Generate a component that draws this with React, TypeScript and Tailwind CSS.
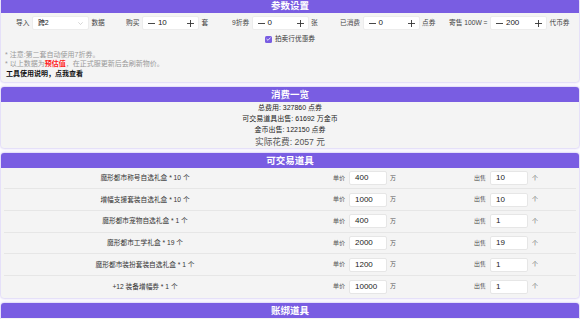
import { ReactNode } from "react";

const ITEMS = [
  { name: "魔形都市称号自选礼盒 * 10 个", price: "400", sell: "10" },
  { name: "增幅支援套装自选礼盒 * 10 个", price: "1000", sell: "10" },
  { name: "魔形都市宠物自选礼盒 * 1 个", price: "400", sell: "1" },
  { name: "魔形都市工学礼盒 * 19 个", price: "2000", sell: "19" },
  { name: "魔形都市装扮套装自选礼盒 * 1 个", price: "1200", sell: "1" },
  { name: "+12 装备增幅券 * 1 个", price: "10000", sell: "1" },
];

function Card({ title, children }: { title: string; children?: ReactNode }) {
  return (
    <div className="mb-[5px] rounded-[3px] overflow-hidden bg-[#f4f4f4] shadow-[0_0_3px_rgba(121,92,224,0.55)]">
      <div className="h-[15px] bg-[#795de2] text-white text-center font-bold text-[9.5px] leading-[15px]">
        {title}
      </div>
      {children}
    </div>
  );
}

function Minus() {
  return (
    <svg width="7" height="7" viewBox="0 0 7 7" className="shrink-0">
      <path d="M0 3.5h7" stroke="#333" strokeWidth="0.9" />
    </svg>
  );
}

function Plus() {
  return (
    <svg width="7" height="7" viewBox="0 0 7 7" className="shrink-0">
      <path d="M0 3.5h7M3.5 0v7" stroke="#333" strokeWidth="0.9" />
    </svg>
  );
}

function Stepper({ value }: { value: string }) {
  return (
    <div className="w-[57px] h-[14px] bg-white rounded-[2px] border border-[#ececec] flex items-center pl-[5px] pr-[4px] text-[8px] text-[#222]">
      <Minus />
      <span className="ml-[3px] flex-1 leading-none">{value}</span>
      <Plus />
    </div>
  );
}

function Field({ value }: { value: string }) {
  return (
    <div className="w-[38px] h-[14px] bg-white rounded-[2px] border border-[#e6e6e6] flex items-center pl-[5px] text-[8px] text-[#222] leading-none">
      {value}
    </div>
  );
}

export default function App() {
  return (
    <div className="min-h-screen bg-white px-[1px] -mt-[2px] font-['Liberation_Sans','Noto_Sans_CJK_SC',sans-serif] text-[6.7px] text-[#333]">
      <Card title="参数设置">
        <div className="pt-[3px] pb-[4px]">
          <div className="h-[14px] flex items-center text-[#444]">
            <div className="w-[110px] ml-[15px] flex items-center gap-[2.5px]">
              <span>导入</span>
              <div className="w-[57px] h-[14px] bg-white rounded-[2px] border border-[#ececec] flex items-center pl-[5px] pr-[5px] text-[7px] text-[#222]">
                <span className="flex-1">跨2</span>
                <svg width="5" height="3" viewBox="0 0 5 3">
                  <path d="M0.3 0.3L2.5 2.5L4.7 0.3" fill="none" stroke="#bbb" strokeWidth="0.6" />
                </svg>
              </div>
              <span>数据</span>
            </div>
            <div className="w-[104px] flex items-center gap-[2.5px]">
              <span>购买</span>
              <Stepper value="10" />
              <span>套</span>
            </div>
            <div className="w-[110px] pl-[2px] flex items-center gap-[2.5px]">
              <span>9折券</span>
              <Stepper value="0" />
              <span>张</span>
            </div>
            <div className="w-[109px] flex items-center gap-[2.5px]">
              <span>已消费</span>
              <Stepper value="0" />
              <span>点券</span>
            </div>
            <div className="flex items-center gap-[2.5px]">
              <span>寄售 100W =</span>
              <Stepper value="200" />
              <span>代币券</span>
            </div>
          </div>

          <div className="mt-[4px] h-[10px] flex items-center justify-center gap-[3px] text-[#333]">
            <span className="w-[7px] h-[7px] rounded-[1.5px] bg-[#795de2] flex items-center justify-center">
              <svg width="5" height="4" viewBox="0 0 5 4">
                <path d="M0.5 2L2 3.3L4.5 0.6" fill="none" stroke="white" strokeWidth="0.8" />
              </svg>
            </span>
            <span>拍卖行优惠券</span>
          </div>

          <div className="mt-[6px] pl-[4px] text-[7px] leading-[9.3px]">
            <div className="text-[#999]">* 注意:第二套自动使用7折券。</div>
            <div className="text-[#999]">
              * 以上数据为<span className="text-[#ff1a1a] font-bold">预估值</span>，在正式服更新后会刷新物价。
            </div>
            <div className="pl-[1px] font-bold text-[#111]">工具使用说明，点我查看</div>
          </div>
        </div>
      </Card>

      <Card title="消费一览">
        <div className="text-center text-[7px] text-[#222] leading-[11.3px]">
          <div>总费用: 327860 点券</div>
          <div>可交易道具出售: 61692 万金币</div>
          <div>金币出售: 122150 点券</div>
          <div className="text-[8.7px] leading-[12px] text-[#555]">实际花费: 2057 元</div>
        </div>
      </Card>

      <Card title="可交易道具">
        <div className="px-[3px]">
          {ITEMS.map((item, i) => (
            <div
              key={item.name}
              className={
                "h-[21.67px] flex items-center " +
                (i < ITEMS.length - 1 ? "border-b border-[#e6e6e6]" : "")
              }
            >
              <div className="w-[282px] text-center text-[#333]">{item.name}</div>
              <div className="w-[188px] pl-[47px] flex items-center text-[6px] text-[#555]">
                <span>单价</span>
                <div className="ml-[4px] mr-[3px]">
                  <Field value={item.price} />
                </div>
                <span>万</span>
              </div>
              <div className="flex items-center text-[6px] text-[#555]">
                <span>出售</span>
                <div className="ml-[4px] mr-[4px]">
                  <Field value={item.sell} />
                </div>
                <span>个</span>
              </div>
            </div>
          ))}
        </div>
      </Card>

      <Card title="账绑道具">
        <div className="h-[40px]" />
      </Card>
    </div>
  );
}
